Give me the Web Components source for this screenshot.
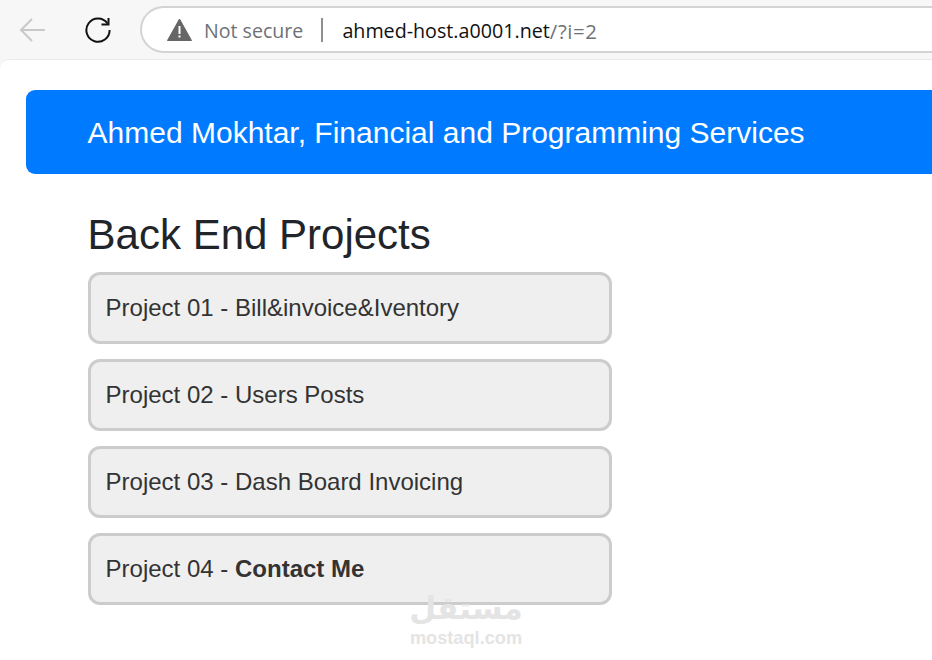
<!DOCTYPE html>
<html>
<head>
<meta charset="utf-8">
<title>Back End Projects</title>
<style>
html, body { margin: 0; height: 100%; background: #f7f7f7; overflow: hidden; }
body { font-family: "Liberation Sans", Arial, sans-serif; }
</style>
</head>
<body>
<browser-bar host-name="ahmed-host.a0001.net" path="/?i=2"></browser-bar>
<page-view>
    <site-banner>Ahmed Mokhtar, Financial and Programming Services</site-banner>
    <project-list heading="Back End Projects">
        <project-row>Project 01 - Bill&amp;invoice&amp;Iventory</project-row>
        <project-row>Project 02 - Users Posts</project-row>
        <project-row>Project 03 - Dash Board Invoicing</project-row>
        <project-row>Project 04 - <b>Contact Me</b></project-row>
    </project-list>
    <water-mark></water-mark>
</page-view>
<script>
class BrowserBar extends HTMLElement {
    connectedCallback() {
        this.attachShadow({mode: 'open'});
        this.shadowRoot.innerHTML = `
            <style>
                :host {
                    display: flex;
                    align-items: center;
                    height: 60px;
                    box-sizing: border-box;
                    padding-bottom: 1px;
                    background: #f7f7f7;
                    font-family: 'Open Sans', 'Noto Sans', sans-serif;
                }
                .nav { display: block; flex: none; }
                .back { margin-left: 18px; }
                .reload { margin-left: 38px; }
                .address {
                    display: flex;
                    align-items: center;
                    flex: none;
                    box-sizing: border-box;
                    width: 820px;
                    height: 47px;
                    margin-left: 28px;
                    padding-left: 25px;
                    background: #fff;
                    border: 2px solid #d3d3d3;
                    border-right: none;
                    border-radius: 24px 0 0 24px;
                    font-size: 20px;
                }
                .warn { margin-right: 12px; flex: none; }
                .secure { color: #6e7277; font-size: 19.6px; padding-top: 2px; }
                .sep { width: 2px; height: 24px; background: #8f8f8f; margin: 0 19px 0 18px; }
                .host { color: #111; font-size: 19.7px; padding-top: 2px; }
                .path { color: #6e7277; font-size: 20.4px; letter-spacing: 0.6px; padding-top: 2px; }
            </style>
            <svg class="nav back" width="28" height="28" viewBox="0 0 28 28" fill="none" stroke="#c9c9c9" stroke-width="2">
                <path d="M27 14H3M14 3L3 14l11 11"/>
            </svg>
            <svg class="nav reload" width="28" height="28" viewBox="0 0 28 28" fill="none" stroke="#111" stroke-width="2">
                <path d="M23.5 7.5A11.6 11.6 0 1 0 25.6 14"/>
                <path d="M24.5 2v6.6h-7"/>
            </svg>
            <div class="address">
                <svg class="warn" width="25" height="23" viewBox="0 0 25 23">
                    <path d="M12.5 1L24.5 22.5H.5z" fill="#666" stroke="#666" stroke-width="1" stroke-linejoin="round"/>
                    <rect x="11.5" y="8" width="2" height="8" fill="#fff"/>
                    <rect x="11.5" y="17.5" width="2" height="2" fill="#fff"/>
                </svg>
                <span class="secure">Not secure</span>
                <span class="sep"></span>
                <span class="host">${this.getAttribute('host-name')}</span><span class="path">${this.getAttribute('path')}</span>
            </div>
        `;
    }
}

class PageView extends HTMLElement {
    constructor() {
        super();
        this.attachShadow({mode: 'open'});
        this.shadowRoot.innerHTML = `
            <style>
                :host {
                    display: block;
                    position: relative;
                    height: 601px;
                    box-sizing: border-box;
                    padding: 30px 0 0 26px;
                    background: #fff;
                    border-top: 1px solid #e9e9e9;
                    border-top-left-radius: 9px;
                    overflow: hidden;
                    margin-top: -1px;
                }
            </style>
            <slot></slot>
        `;
    }
}

class SiteBanner extends HTMLElement {
    constructor() {
        super();
        this.attachShadow({mode: 'open'});
        this.shadowRoot.innerHTML = `
            <style>
                :host {
                    display: flex;
                    align-items: center;
                    height: 84px;
                    width: 940px;
                    box-sizing: border-box;
                    padding: 2px 0 0 61.6px;
                    background: #007bff;
                    color: #fff;
                    border-radius: 9px;
                    font-size: 30px;
                }
            </style>
            <slot></slot>
        `;
    }
}

class ProjectList extends HTMLElement {
    connectedCallback() {
        this.attachShadow({mode: 'open'});
        this.shadowRoot.innerHTML = `
            <style>
                :host {
                    display: block;
                    width: 524px;
                    margin: 37px 0 0 62px;
                }
                h1 {
                    margin: 0 0 13px -0.4px;
                    font-size: 42px;
                    line-height: 48px;
                    font-weight: 400;
                    color: #212529;
                }
                .rows { display: flex; flex-direction: column; gap: 15px; }
            </style>
            <h1>${this.getAttribute('heading')}</h1>
            <div class="rows"><slot></slot></div>
        `;
    }
}

class ProjectRow extends HTMLElement {
    constructor() {
        super();
        this.attachShadow({mode: 'open'});
        this.shadowRoot.innerHTML = `
            <style>
                :host {
                    display: flex;
                    align-items: center;
                    box-sizing: border-box;
                    height: 72px;
                    padding-left: 14.6px;
                    background: #efefef;
                    border: 3px solid #ccc;
                    border-radius: 12px;
                    font-size: 24px;
                    color: #333;
                }
                .label { white-space: pre; }
            </style>
            <span class="label"><slot></slot></span>
        `;
    }
}

class WaterMark extends HTMLElement {
    constructor() {
        super();
        this.attachShadow({mode: 'open'});
        this.shadowRoot.innerHTML = `
            <style>
                :host {
                    position: absolute;
                    left: 398px;
                    top: 530px;
                    width: 136px;
                    display: flex;
                    flex-direction: column;
                    align-items: center;
                    color: #e4e4e4;
                    font-family: 'DejaVu Sans', sans-serif;
                    font-weight: 700;
                }
                .ar { font-size: 31px; line-height: 36px; }
                .en { font-size: 18.2px; line-height: 20px; margin-top: 2px; font-family: 'Liberation Sans', sans-serif; }
            </style>
            <span class="ar" dir="rtl">مستقل</span>
            <span class="en">mostaql.com</span>
        `;
    }
}

customElements.define('browser-bar', BrowserBar);
customElements.define('page-view', PageView);
customElements.define('site-banner', SiteBanner);
customElements.define('project-list', ProjectList);
customElements.define('project-row', ProjectRow);
customElements.define('water-mark', WaterMark);
</script>
</body>
</html>
